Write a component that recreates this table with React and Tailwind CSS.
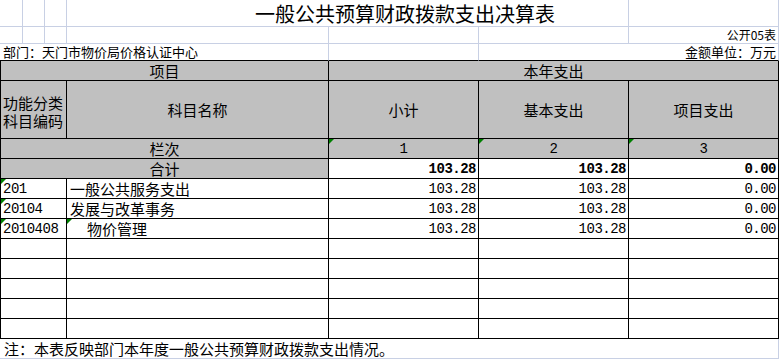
const grid = 'border-[#c8d0e4]';
const cjk = "font-['Noto_Sans_CJK_SC',sans-serif]";
const mono = "font-['Liberation_Mono','Noto_Sans_CJK_SC',monospace] text-[14px] tracking-[-0.5px]";

const rows = [
  { code: '201', name: '一般公共服务支出', indent: false, values: ['103.28', '103.28', '0.00'] },
  { code: '20104', name: '发展与改革事务', indent: false, values: ['103.28', '103.28', '0.00'] },
  { code: '2010408', name: '物价管理', indent: true, values: ['103.28', '103.28', '0.00'] },
];

const Flag = () => (
  <span className="absolute left-0 top-0 h-0 w-0 border-t-[5px] border-r-[5px] border-t-[#008000] border-r-transparent" />
);

export default function App() {
  return (
    <div className={`w-[779px] h-[359px] overflow-hidden bg-white text-black ${cjk}`}>
      <div className="grid grid-cols-[23px_22px_22px_262px_150px_150px_150px] grid-rows-[27px_17px_17px_20px_58px_20px_20px_20px_20px_20px_20px_20px_20px_20px_20px_20px]">
        {/* 第一行：标题 */}
        <div className={`border-r border-b ${grid}`} />
        <div className={`border-r border-b ${grid}`} />
        <div className={`border-r border-b ${grid}`} />
        <div className={`col-span-3 border-r border-b ${grid} flex items-end pl-[188px] text-[20px] leading-[24px] whitespace-nowrap`}>
          一般公共预算财政拨款支出决算表
        </div>
        <div className={`border-r border-b ${grid}`} />

        {/* 第二行 */}
        <div className={`border-r border-b ${grid}`} />
        <div className={`border-r border-b ${grid}`} />
        <div className={`border-r border-b ${grid}`} />
        <div className={`border-r border-b ${grid}`} />
        <div className={`border-r border-b ${grid}`} />
        <div className={`border-r border-b ${grid}`} />
        <div className={`border-r border-b ${grid} flex items-center justify-end pr-[2px] text-[12px] leading-[16px]`}>
          公开05表
        </div>

        {/* 第三行 */}
        <div className="col-span-4 border-r border-b border-r-[#c8d0e4] border-b-black flex items-center pl-[3px] text-[13px] leading-[16px] whitespace-nowrap">
          部门：天门市物价局价格认证中心
        </div>
        <div className="border-r border-b border-r-[#c8d0e4] border-b-black" />
        <div className="col-span-2 border-r border-b border-r-[#c8d0e4] border-b-black flex items-center justify-end pr-[2px] text-[13px] leading-[16px]">
          金额单位：万元
        </div>

        {/* 表头 */}
        <div className="col-span-4 border-l border-r border-b border-black bg-[#c0c0c0] flex items-center justify-center text-[15px] leading-[18px]">
          项目
        </div>
        <div className="col-span-3 border-r border-b border-black bg-[#c0c0c0] flex items-center justify-center text-[15px] leading-[18px]">
          本年支出
        </div>

        <div className="col-span-3 border-l border-r border-b border-black bg-[#c0c0c0] flex flex-col justify-center pl-[2px] pt-[4px] text-[15px] leading-[18px]">
          <span>功能分类</span>
          <span>科目编码</span>
        </div>
        <div className="border-r border-b border-black bg-[#c0c0c0] flex items-center justify-center text-[15px] leading-[18px]">
          科目名称
        </div>
        <div className="border-r border-b border-black bg-[#c0c0c0] flex items-center justify-center text-[15px] leading-[18px]">
          小计
        </div>
        <div className="border-r border-b border-black bg-[#c0c0c0] flex items-center justify-center text-[15px] leading-[18px]">
          基本支出
        </div>
        <div className="border-r border-b border-black bg-[#c0c0c0] flex items-center justify-center text-[15px] leading-[18px]">
          项目支出
        </div>

        <div className="col-span-4 border-l border-r border-b border-black bg-[#c0c0c0] flex items-center justify-center text-[15px] leading-[18px]">
          栏次
        </div>
        {['1', '2', '3'].map((n) => (
          <div key={n} className={`relative border-r border-b border-black bg-[#c0c0c0] flex items-center justify-center leading-[18px] ${mono}`}>
            <Flag />
            {n}
          </div>
        ))}

        <div className="col-span-4 border-l border-r border-b border-black bg-[#c0c0c0] flex items-center justify-center text-[15px] leading-[18px]">
          合计
        </div>
        {['103.28', '103.28', '0.00'].map((v, i) => (
          <div key={i} className={`border-r border-b border-black flex items-center justify-end pr-[2px] leading-[18px] font-bold ${mono}`}>
            {v}
          </div>
        ))}

        {/* 数据行 */}
        {rows.map((r) => (
          <div key={r.code} className="contents">
            <div className={`relative col-span-3 border-l border-r border-b border-black flex items-center pl-[2px] leading-[18px] ${mono}`}>
              <Flag />
              {r.code}
            </div>
            <div className={`relative border-r border-b border-black flex items-center text-[15px] leading-[18px] whitespace-nowrap ${r.indent ? 'pl-[20px]' : 'pl-[3px]'}`}>
              {r.indent && <Flag />}
              {r.name}
            </div>
            {r.values.map((v, i) => (
              <div key={i} className={`border-r border-b border-black flex items-center justify-end pr-[2px] leading-[18px] ${mono}`}>
                {v}
              </div>
            ))}
          </div>
        ))}

        {/* 空行 */}
        {[0, 1, 2, 3, 4].map((k) => (
          <div key={k} className="contents">
            <div className="col-span-3 border-l border-r border-b border-black" />
            <div className="border-r border-b border-black" />
            <div className="border-r border-b border-black" />
            <div className="border-r border-b border-black" />
            <div className="border-r border-b border-black" />
          </div>
        ))}

        {/* 注 */}
        <div className={`col-span-7 border-r border-b ${grid} flex items-center pl-[4px] text-[15px] leading-[18px] whitespace-nowrap`}>
          注：本表反映部门本年度一般公共预算财政拨款支出情况。
        </div>
      </div>
    </div>
  );
}
